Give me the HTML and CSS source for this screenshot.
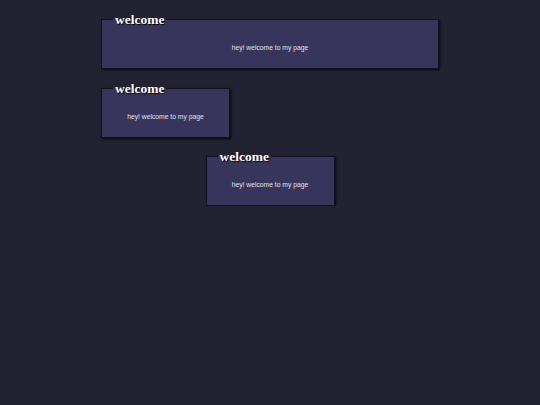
FILE: index.html
```html
<!DOCTYPE html>
<html>
<head>
<meta charset="utf-8">
<link rel="stylesheet" href="styles.css">
</head>
<body>
<main class="wrap">
  <fieldset class="card card-wide">
    <legend class="card-title">welcome</legend>
    <p class="card-text">hey! welcome to my page</p>
  </fieldset>
  <fieldset class="card card-small">
    <legend class="card-title">welcome</legend>
    <p class="card-text">hey! welcome to my page</p>
  </fieldset>
  <fieldset class="card card-small card-center">
    <legend class="card-title">welcome</legend>
    <p class="card-text">hey! welcome to my page</p>
  </fieldset>
</main>
</body>
</html>
```
FILE: styles.css
```css
html, body {
  margin: 0;
  padding: 0;
  background: #232232;
}
.wrap {
  width: 338px;
  margin: 0 auto;
  padding-top: 12px;
  display: flex;
  flex-direction: column;
  align-items: flex-start;
  gap: 11.5px;
}
.card {
  box-sizing: border-box;
  margin: 0;
  padding: 0 11px;
  border: 1px solid #121120;
  background: #37355b;
  box-shadow: 1px 1px 2px rgba(0,0,0,0.8);
  height: 57px;
  min-width: 0;
}
.card-wide { width: 338px; }
.card-small { width: 129px; }
.card-center { align-self: center; }
.card-title {
  padding: 0 2px;
  font-family: "Liberation Serif", "Times New Roman", serif;
  font-weight: bold;
  font-size: 13.5px;
  line-height: 15px;
  color: #ffffff;
  text-shadow: 1px 1px 1px #000;
}
.card-text {
  margin: 17px 0 0;
  text-align: center;
  font-family: "Liberation Sans", Arial, sans-serif;
  font-size: 6.75px;
  color: #e2e2ee;
}
```
